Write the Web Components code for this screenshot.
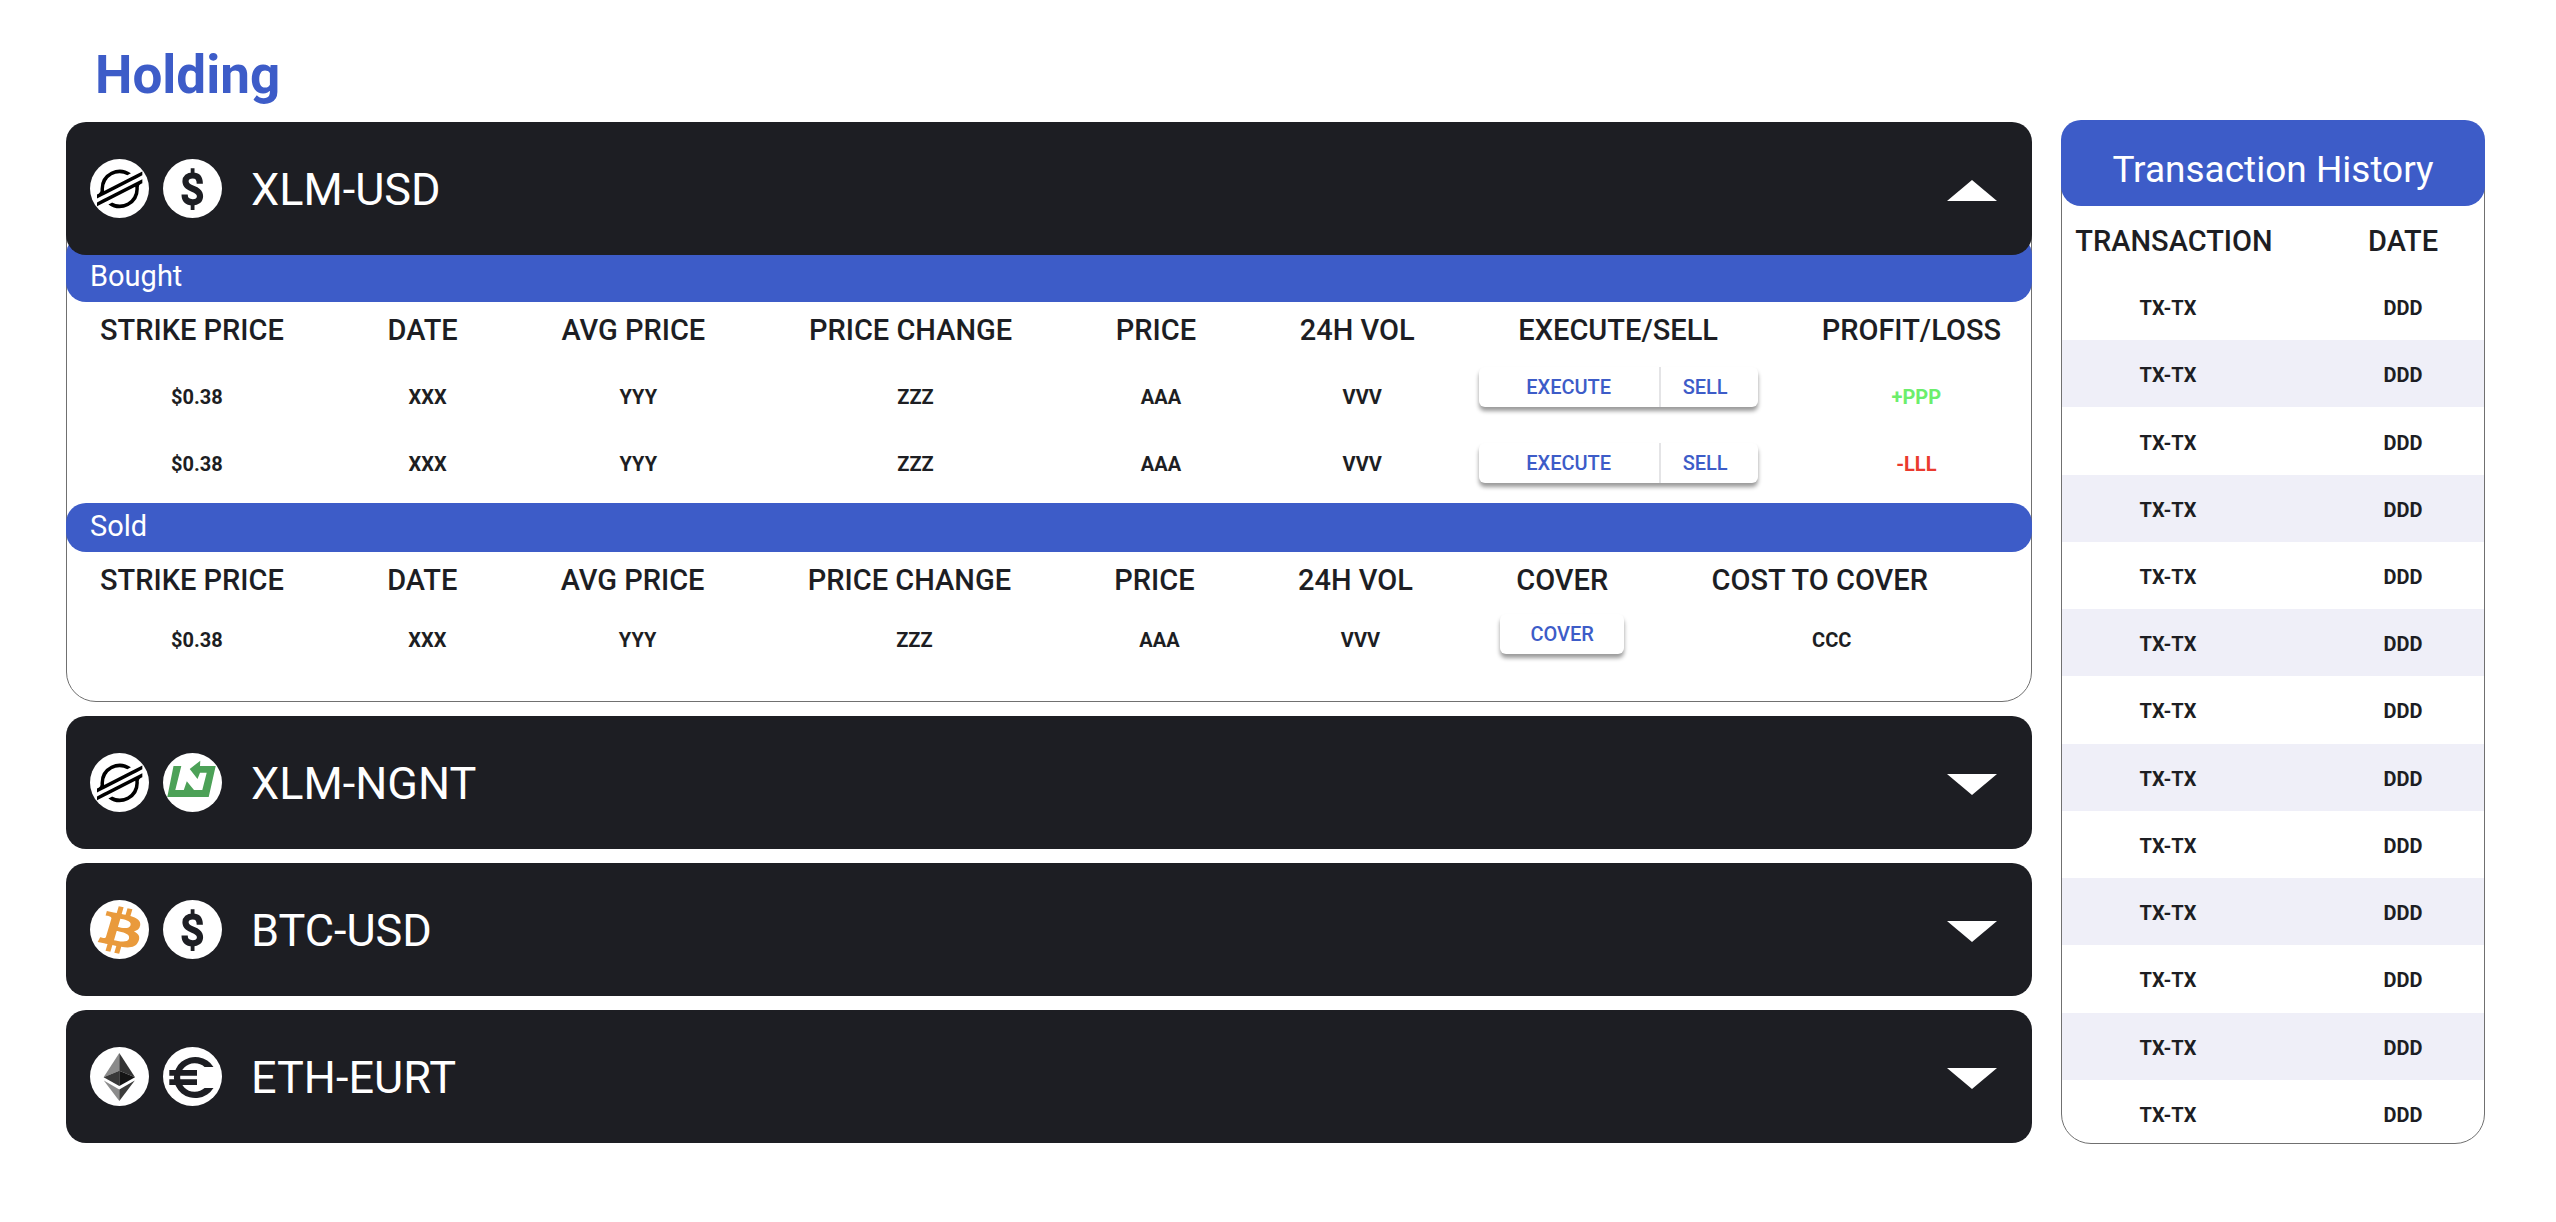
<!DOCTYPE html>
<html lang="en">
<head>
<meta charset="utf-8">
<title>Holding</title>
<style>
  :root {
    --blue: #3d5cc8;
    --ink: #1d1e23;
    --line: #707070;
    --stripe: #efeff8;
    --gain: #6cee6c;
    --loss: #ea3a2e;
  }
  body { margin: 0; background: #fff; color: var(--ink); font-family: Roboto, "Liberation Sans", sans-serif; }
</style>
</head>
<body>
<holding-page></holding-page>

<script>
const define = (name, html, setup) => {
  const template = document.createElement('template');
  template.innerHTML = html;
  customElements.define(name, class extends HTMLElement {
    constructor() {
      super();
      this.attachShadow({ mode: 'open' }).append(template.content.cloneNode(true));
    }
    connectedCallback() { if (setup) setup(this, this.shadowRoot); }
  });
};

const glyphs = {
  xlm: `<g transform="translate(7 10.7) scale(.1918)"><path d="M203 26.16l-28.46 14.5-137.43 70a82.49 82.49 0 0 1-.7-10.69A81.87 81.87 0 0 1 158.2 28.6l16.29-8.3 2.43-1.24A100 100 0 0 0 18.18 100q0 3.82.29 7.61a18.19 18.19 0 0 1-9.88 17.58L0 129.57V150l25.29-12.89 8.19-4.18 8.07-4.11L186.43 55l16.28-8.29 33.65-17.15V9.14zM236.36 50L49.78 145 33.5 153.31 0 170.38v20.41l33.27-16.95 28.46-14.5L199.3 89.24A83.45 83.45 0 0 1 200 100 81.87 81.87 0 0 1 78.09 171.36l-1 .53-17.66 9A100 100 0 0 0 218.18 100c0-2.57-.1-5.14-.29-7.68a18.2 18.2 0 0 1 9.87-17.58l8.6-4.38z"/></g>`,
  usd: `<g fill="none" stroke="#1d1e23"><path stroke-width="6.200" d="M36.800 24.800C36.800 18.800 34.300 16.500 29.700 16.500C25 16.500 22.500 19 22.500 22.300C22.500 31.500 37 28 37 37.200C37 41 34.300 43.300 29.700 43.300C24.500 43.300 21.600 41 21.600 35.600"/><path stroke-width="3.800" d="M29.600 9.200v6M29.600 44.500v6.500"/></g>`,
  ngnt: `<path fill="#4ca157" d="M10.500 13H18.300L12.300 37H20.800L23.800 28.300L31 37H39.300L43.700 19.700H37L34.500 26L26.700 16L37.300 7.700L37 13H52.700L45.700 44H4.300z"/>`,
  btc: `<path fill="#e99a3c" transform="translate(-13.97 -6.7) scale(1.392 1.168)" d="m46.103,27.444c0.637-4.258-2.605-6.547-7.038-8.074l1.438-5.768-3.511-0.875-1.4,5.616c-0.923-0.23-1.871-0.447-2.813-0.662l1.41-5.653-3.509-0.875-1.439,5.766c-0.764-0.174-1.514-0.346-2.242-0.527l0.004-0.018-4.842-1.209-0.934,3.75s2.605,0.597,2.55,0.634c1.422,0.355,1.679,1.296,1.636,2.042l-1.638,6.571c0.098,0.025,0.225,0.061,0.365,0.117-0.117-0.029-0.242-0.061-0.371-0.092l-2.296,9.205c-0.174,0.432-0.615,1.08-1.609,0.834,0.035,0.051-2.552-0.637-2.552-0.637l-1.743,4.019,4.569,1.139c0.85,0.213,1.683,0.436,2.503,0.646l-1.453,5.834,3.507,0.875,1.439-5.772c0.958,0.26,1.888,0.5,2.798,0.726l-1.434,5.745,3.511,0.875,1.453-5.823c5.987,1.133,10.489,0.676,12.384-4.739,1.527-4.36-0.076-6.875-3.226-8.515,2.294-0.529,4.022-2.038,4.483-5.155zm-8.022,11.249c-1.085,4.36-8.426,2.003-10.806,1.412l1.928-7.729c2.38,0.594,10.012,1.77,8.878,6.317zm1.086-11.312c-0.99,3.966-7.1,1.951-9.082,1.457l1.748-7.01c1.982,0.494,8.365,1.416,7.334,5.553z"/>`,
  eth: `<path fill="#8a8a8a" d="M29.300 6L13.600 30.300L29.300 23.700z"/><path fill="#343434" d="M29.300 6L45 30.300L29.300 23.700z"/><path fill="#393939" d="M13.600 30.300L29.300 23.700V39z"/><path fill="#141414" d="M45 30.300L29.300 23.700V39z"/><path fill="#8c8c8c" d="M13.800 33.500L29.300 42.500V54z"/><path fill="#3c3c3b" d="M44.800 33.500L29.300 42.500V54z"/>`,
  eurt: `<path fill="#1d1e23" d="M50.500 20A21.300 20.500 0 1 0 50.500 41H41.600A14.600 14.200 0 1 1 41.600 20z"/><path fill="#1d1e23" d="M6.300 23H34v5.700H6.300zM6.300 32.300H34V38H6.300z"/>`
};

define('coin-icon', `
  <style>
    :host { display: block; width: 59px; height: 59px; }
    svg { display: block; width: 100%; height: 100%; }
  </style>
  <svg viewBox="0 0 59 59" aria-hidden="true"></svg>
`, (el, root) => {
  root.querySelector('svg').innerHTML = '<circle cx="29.500" cy="29.500" r="29.500" fill="#fff"/>' + glyphs[el.getAttribute('name')];
});

define('pair-card', `
  <style>
    :host { display: block; }
    .card { border-radius: 30px; }
    :host([open]) .card { border: 1px solid var(--line); padding-bottom: 35px; }
    button {
      display: flex; align-items: center; gap: 29px; box-sizing: border-box; width: 100%; height: 133px;
      position: relative; z-index: 1; border: 0; border-radius: 20px; padding: 0 35px 0 24px;
      background: var(--ink); color: #fff; font: inherit; font-size: 45px; line-height: 52px; cursor: pointer;
    }
    :host([open]) button { width: calc(100% + 2px); margin: -1px -1px 0; }
    .coins { display: flex; gap: 14px; }
    .label { flex: 1; text-align: left; padding-top: 3px; }
    .arrow { width: 50px; height: 21px; padding-top: 3px; fill: currentColor; }
    :host([open]) .arrow path { transform: scaleY(-1); transform-origin: center; }
    .body { display: none; }
    :host([open]) .body { display: block; margin-top: -20px; }
  </style>
  <div class="card">
    <button type="button">
      <span class="coins"></span>
      <span class="label"></span>
      <svg class="arrow" viewBox="0 0 50 21" aria-hidden="true"><path d="M0 0H50L25 21z"/></svg>
    </button>
    <div class="body"><slot></slot></div>
  </div>
`, (el, root) => {
  const button = root.querySelector('button');
  root.querySelector('.label').textContent = el.getAttribute('pair');
  root.querySelector('.coins').innerHTML =
    el.getAttribute('coins').split(' ').map(c => `<coin-icon name="${c}"></coin-icon>`).join('');
  button.setAttribute('aria-expanded', el.hasAttribute('open'));
  button.onclick = () => button.setAttribute('aria-expanded', el.toggleAttribute('open'));
});

define('section-bar', `
  <style>
    :host { display: block; margin: 0 -1px; border-radius: 20px; background: var(--blue); }
    :host([tucked]) { padding-top: 18px; }
    h2 { margin: 0; padding: 0 24px 2px; color: #fff; font-size: 29px; line-height: 47px; font-weight: 400; }
  </style>
  <h2><slot></slot></h2>
`);

define('raised-actions', `
  <style>
    :host { display: flex; width: max-content; height: 40px; border-radius: 6px; background: #fff; box-shadow: 0 4px 4px rgba(0, 0, 0, .4); }
    button { border: 0; padding: 0 30px; background: none; color: var(--blue); font: inherit; font-size: 20px; line-height: 40px; font-weight: 500; cursor: pointer; }
    button:not(:last-child) { width: 180px; }
    button + button { border-left: 2px solid #e4e4e6; padding: 0 30px 0 22px; }
  </style>
`, (el, root) => {
  el.getAttribute('labels').split(' ').forEach(label => {
    const b = document.createElement('button');
    b.type = 'button';
    b.textContent = label;
    root.append(b);
  });
});

define('positions-table', `
  <style>
    :host { display: block; padding: 0 30px 0 33px; }
    table { display: grid; grid-template: 62px / repeat(8, auto); grid-auto-rows: 67px; justify-content: space-between; }
    :host([kind="sold"]) { padding-right: 103px; }
    :host([kind="sold"]) table { grid-auto-rows: 52px; }
    thead, tbody, tr { display: contents; }
    th { padding: 0; font-size: 29px; line-height: 56px; font-weight: 500; white-space: nowrap; }
    td { align-self: center; padding: 0 0 0 10px; font-size: 20px; line-height: 24px; font-weight: 700; text-align: center; }
    :host([kind="bought"]) td { padding-bottom: 2px; }
    :host([kind]) td.actions { display: flex; flex-direction: column; align-items: center; align-self: start; gap: 36px; margin: 0 -40px; padding: 3px 0 0; }
    :host([kind="sold"]) td.actions { padding: 0; }
    td.last { padding-left: 24px; }
    .gain { color: var(--gain); }
    .loss { color: var(--loss); }
  </style>
  <table><thead><tr></tr></thead><tbody></tbody></table>
`, (el, root) => {
  const sold = el.getAttribute('kind') === 'sold';
  const heads = ['STRIKE PRICE', 'DATE', 'AVG PRICE', 'PRICE CHANGE', 'PRICE', '24H VOL']
    .concat(sold ? ['COVER', 'COST TO COVER'] : ['EXECUTE/SELL', 'PROFIT/LOSS']);
  const cells = ['$0.38', 'XXX', 'YYY', 'ZZZ', 'AAA', 'VVV'].map(v => `<td>${v}</td>`).join('');
  const group = '<raised-actions labels="EXECUTE SELL"></raised-actions>';
  root.querySelector('thead tr').innerHTML = heads.map(h => `<th scope="col">${h}</th>`).join('');
  root.querySelector('tbody').innerHTML = sold
    ? `<tr>${cells}<td class="actions"><raised-actions labels="COVER"></raised-actions></td><td class="last">CCC</td></tr>`
    : `<tr>${cells}<td class="actions" rowspan="2" style="grid-row: span 2">${group}${group}</td><td class="gain">+PPP</td></tr>
       <tr>${cells}<td class="loss">-LLL</td></tr>`;
});

define('transaction-history', `
  <style>
    :host { display: flex; flex-direction: column; box-sizing: border-box; border: 1px solid var(--line); border-radius: 30px; }
    h2 { margin: -1px -1px 0; padding-top: 14px; border-radius: 20px; background: var(--blue); color: #fff; font-size: 37px; line-height: 72px; font-weight: 400; text-align: center; }
    table { flex: 1; display: flex; flex-direction: column; margin-bottom: -4px; }
    thead { display: block; }
    tbody { flex: 1; display: grid; grid-auto-rows: 1fr; }
    tr { display: grid; grid-template-columns: 198px 70px; justify-content: space-between; align-items: center; padding: 3px 46px 0 13px; }
    tbody tr:nth-child(even) { background: var(--stripe); }
    th { padding: 0; font-size: 29px; line-height: 64px; font-weight: 500; }
    td { padding: 0; font-size: 20px; line-height: 24px; font-weight: 700; text-align: center; }
    td:first-child { padding-right: 12px; }
  </style>
  <h2>Transaction History</h2>
  <table>
    <thead><tr><th scope="col">TRANSACTION</th><th scope="col">DATE</th></tr></thead>
    <tbody></tbody>
  </table>
`, (el, root) => {
  root.querySelector('tbody').innerHTML = '<tr><td>TX-TX</td><td>DDD</td></tr>'.repeat(13);
});

define('holding-page', `
  <style>
    :host { display: grid; grid-template-columns: minmax(0, 1fr) 424px; gap: 29px; padding: 0 71px 60px 66px; }
    h1 { margin: 0; padding: 44px 29px 16px; color: var(--blue); font-size: 53px; line-height: 62px; font-weight: 700; }
    .pairs { display: flex; flex-direction: column; gap: 14px; }
    transaction-history { margin: 120px 0 -1px; }
  </style>
  <main>
    <h1>Holding</h1>
    <div class="pairs">
      <pair-card pair="XLM-USD" coins="xlm usd" open>
        <section-bar tucked>Bought</section-bar>
        <positions-table kind="bought"></positions-table>
        <section-bar style="margin-top: 5px">Sold</section-bar>
        <positions-table kind="sold"></positions-table>
      </pair-card>
      <pair-card pair="XLM-NGNT" coins="xlm ngnt"></pair-card>
      <pair-card pair="BTC-USD" coins="btc usd"></pair-card>
      <pair-card pair="ETH-EURT" coins="eth eurt"></pair-card>
    </div>
  </main>
  <transaction-history></transaction-history>
`);
</script>
</body>
</html>
